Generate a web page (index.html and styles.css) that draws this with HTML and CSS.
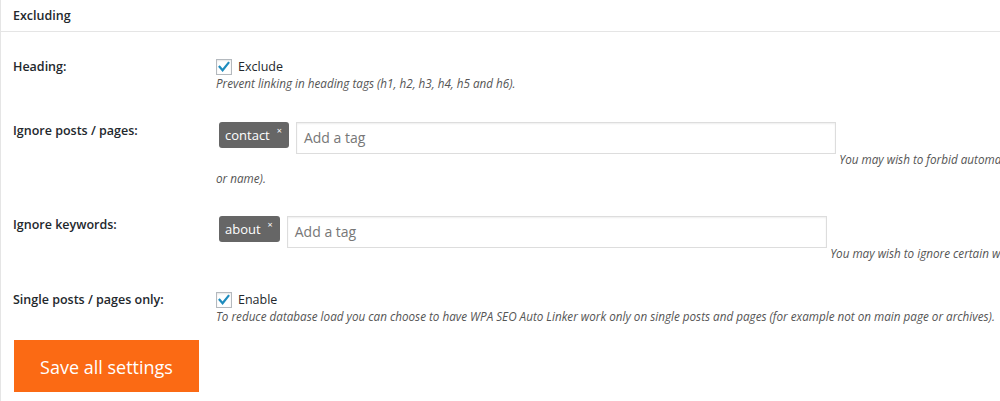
FILE: index.html
```html
<!DOCTYPE html>
<html lang="en">
<head>
<meta charset="utf-8">
<title>Excluding settings</title>
<link rel="stylesheet" href="styles.css">
</head>
<body>
<div class="panel">
  <div class="panel-head">Excluding</div>
  <div class="form">
    <div class="row">
      <div class="label">Heading:</div>
      <div class="field">
        <label class="check"><span class="box"><svg width="16" height="16" viewBox="0 0 16 16"><path d="M3.6 7.8 L6.6 11.2 L12.4 4" fill="none" stroke="#1e8cbe" stroke-width="2.2" stroke-linecap="square" stroke-linejoin="miter"/></svg></span>Exclude</label>
        <div class="desc">Prevent linking in heading tags (h1, h2, h3, h4, h5 and h6).</div>
      </div>
    </div>
    <div class="row">
      <div class="label">Ignore posts / pages:</div>
      <div class="field field-tags">
        <div class="tags"><div class="tags-inner"><span class="chip">contact<span class="x">×</span></span><span class="tag-input">Add a tag</span></div></div>
        <span class="desc">You may wish to forbid automatic linking on certain posts or pages. Separate them by comma (ID, slug <span class="nw">or name).</span></span>
      </div>
    </div>
    <div class="row">
      <div class="label">Ignore keywords:</div>
      <div class="field field-tags">
        <div class="tags"><div class="tags-inner"><span class="chip">about<span class="x">×</span></span><span class="tag-input">Add a tag</span></div></div>
        <span class="desc">You may wish to ignore certain words or phrases.</span>
      </div>
    </div>
    <div class="row">
      <div class="label">Single posts / pages only:</div>
      <div class="field">
        <label class="check"><span class="box"><svg width="16" height="16" viewBox="0 0 16 16"><path d="M3.6 7.8 L6.6 11.2 L12.4 4" fill="none" stroke="#1e8cbe" stroke-width="2.2" stroke-linecap="square" stroke-linejoin="miter"/></svg></span>Enable</label>
        <div class="desc">To reduce database load you can choose to have WPA SEO Auto Linker work only on single posts and pages (for example not on main page or archives).</div>
      </div>
    </div>
  </div>
  <div class="actions"><button class="save" type="button">Save all settings</button></div>
</div>
</body>
</html>
```
FILE: styles.css
```css
html, body {
  margin: 0;
  padding: 0;
  background: #fff;
  overflow: hidden;
}
body {
  font-family: "Open Sans", "Noto Sans", sans-serif;
  color: #23282d;
  font-size: 13px;
}
.panel {
  width: 1405px;
  height: 401px;
  border-left: 1px solid #e5e5e5;
  box-sizing: border-box;
}
.panel-head {
  padding: 8px 12px;
  line-height: 15px;
  font-size: 12.5px;
  font-weight: 600;
  border-bottom: 1px solid #e5e5e5;
}
.form {
  padding-top: 11px;
}
.row {
  display: flex;
  padding: 15px 0;
}
.label {
  width: 203px;
  padding-left: 12px;
  flex: none;
  font-size: 12.5px;
  font-weight: 600;
  line-height: 17px;
}
.field {
  flex: 1;
  padding-right: 10px;
  line-height: 17px;
}
.field-tags {
  line-height: 19px;
  margin-bottom: -2px;
}
.check {
  display: flex;
  align-items: center;
  gap: 6px;
  font-size: 12.5px;
  line-height: 17px;
}
.box {
  width: 16px;
  height: 16px;
  box-sizing: border-box;
  border: 1px solid #b4b9be;
  box-shadow: inset 0 1px 2px rgba(0,0,0,.1);
  background: #fff;
  display: flex;
  align-items: center;
  justify-content: center;
}
.box svg { display: block; margin: -1px; }
.desc {
  font-style: italic;
  font-size: 11.7px;
  color: #555;
}
.nw { white-space: nowrap; }
.tags {
  display: inline-block;
  overflow: hidden;
  margin-bottom: 10px;
  vertical-align: baseline;
}
.tags-inner {
  display: flex;
  align-items: flex-start;
}
.chip {
  margin-left: 3px;
  height: 26px;
  box-sizing: border-box;
  padding: 0 6px;
  background: #666;
  color: #fff;
  border-radius: 3px;
  font-size: 13px;
  line-height: 26px;
  display: flex;
  align-items: flex-start;
}
.x {
  font-size: 9px;
  line-height: 18px;
  margin-left: 7px;
  margin-right: 1px;
}
.tag-input {
  margin-left: 7px;
  width: 540px;
  height: 32px;
  box-sizing: border-box;
  border: 1px solid #ddd;
  box-shadow: inset 0 1px 2px rgba(0,0,0,.07);
  padding: 0 7px;
  font-size: 14px;
  line-height: 30px;
  color: #777;
}
.actions {
  padding: 0 0 0 13px;
}
.save {
  width: 185px;
  height: 52px;
  border: 0;
  border-radius: 0;
  background: #fb6a14;
  color: #fff;
  font-family: "Open Sans", "Noto Sans", sans-serif;
  font-size: 18px;
  padding: 2px 0 0;
  line-height: 50px;
  cursor: pointer;
}
```
